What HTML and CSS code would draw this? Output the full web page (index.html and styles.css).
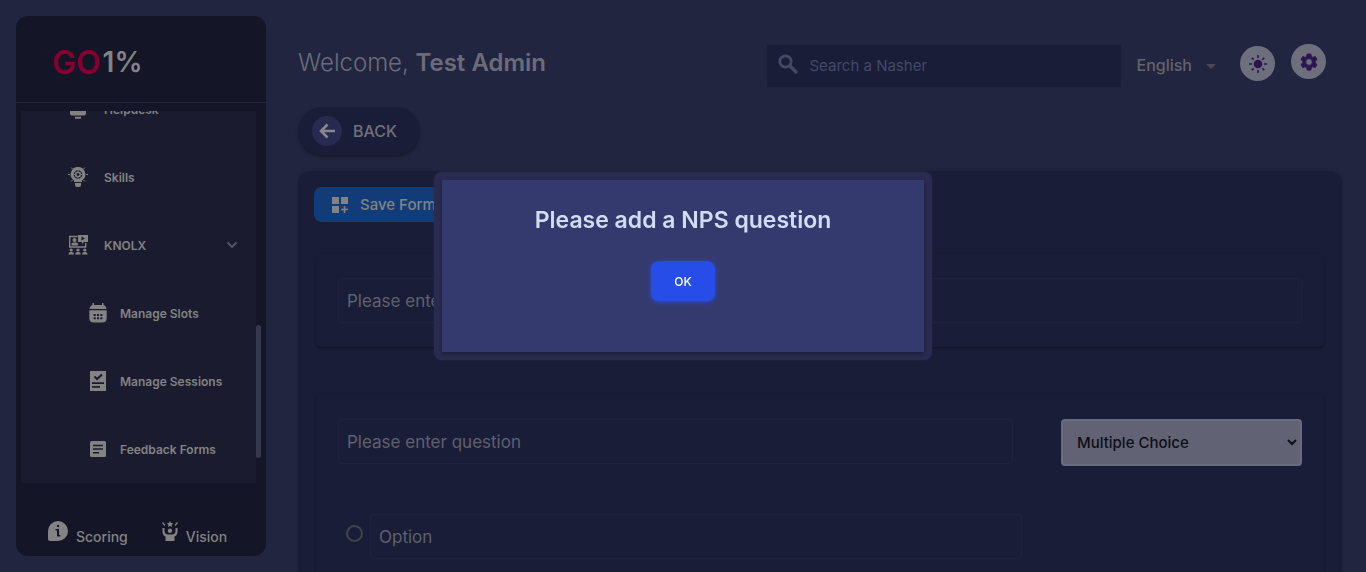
FILE: index.html
```html
<!DOCTYPE html>
<html lang="en">
<head>
<meta charset="utf-8">
<meta name="viewport" content="width=device-width, initial-scale=1">
<title>GO1% – Feedback Forms</title>
<link rel="stylesheet" href="styles.css">
</head>
<body>
<div class="app">
  <aside class="sidebar">
    <div class="brand"><span class="brand-go">GO</span><span class="brand-pct">1%</span></div>
    <div class="menu-wrap">
      <nav class="menu">
        <a class="item" href="#">
          <svg class="icon" viewBox="0 0 20 20"><path d="M4 1h12q2 0 2 2v11.500q0 2-2 2H4q-2 0-2-2V3q0-2 2-2zM7 17.800h6v2H7z"/></svg>
          <span>Helpdesk</span>
        </a>
        <a class="item" href="#">
          <svg class="icon" viewBox="0 0 20 20"><path fill-rule="evenodd" d="M10 0a7.300 7.300 0 0 1 4 13.400V15H6v-1.600A7.300 7.300 0 0 1 10 0zm0 3.200a4.300 4.300 0 1 0 0 8.600 4.300 4.300 0 0 0 0-8.600z"/><circle cx="10" cy="7.500" r="2.200" fill="none" stroke="currentColor" stroke-width="1.500"/><path d="M10 3.500v8M6 7.500h2M12 7.500h2M7.200 4.700l1.200 1.200M12.800 4.700l-1.200 1.200M7.200 10.300l1.200-1.200M12.800 10.300l-1.200-1.200" stroke="currentColor" stroke-width="1" stroke-dasharray="2 4"/><path d="M7 16h6v2q0 2-2 2H9q-2 0-2-2zM0 7h2v1H0zM18 7h2v1h-2z"/><path d="M3 .5l1.500 1.500M17 .5l-1.500 1.500M3 14.500l1.500-1.500M17 14.500l-1.500-1.500" stroke="currentColor"/></svg>
          <span>Skills</span>
        </a>
        <a class="item" href="#">
          <svg class="icon" viewBox="0 0 20 20"><path d="M9.500 1.500H1.700v10.500h16V8" fill="none" stroke="currentColor" stroke-width="1.400"/><path d="M10 0h10v7h-4l-2 2V7h-4z"/><path class="cut" d="M13.500 1.500l3.500 2-3.500 2z"/><circle cx="6.500" cy="5" r="2"/><path d="M3.500 10.500V9q0-1.500 2-1.500h2.500q2 0 2 1.500v1.500z"/><circle cx="3.200" cy="15" r="1.600"/><circle cx="10" cy="15" r="1.600"/><circle cx="16.800" cy="15" r="1.600"/><path d="M.4 19.500q0-2.500 2-2.500H4q2 0 2 2.500zM7.200 19.500q0-2.500 2-2.500h1.600q2 0 2 2.500zM14 19.500q0-2.500 2-2.500h1.600q2 0 2 2.500z"/></svg>
          <span>KNOLX</span>
          <svg class="chevron" viewBox="0 0 12 8"><path d="M1.500 1.500L6 6l4.500-4.500" fill="none" stroke="currentColor" stroke-width="1.800"/></svg>
        </a>
        <a class="item sub" href="#">
          <svg class="icon" viewBox="0 0 20 20"><path d="M4.500 0H6v2h8V0h1.500v2Q18 2.500 18.500 6h-17Q2 2.500 4.500 2z"/><path d="M1.300 7.300h17.400V15q0 4.500-4.500 4.500H5.800Q1.300 19.500 1.300 15z"/><path class="cut" d="M5.700 11h2v2h-2zM9 11h2v2H9zM12.300 11h2v2h-2zM5.700 14.300h2v2h-2zM9 14.300h2v2H9zM12.300 14.300h2v2h-2z"/></svg>
          <span>Manage Slots</span>
        </a>
        <a class="item sub" href="#">
          <svg class="icon" viewBox="0 0 20 20"><path d="M2 0h16v20H2z"/><path class="cut" d="M4 11.200h12V13H4zM4 15h8v1.800H4z"/><path class="cut-line" d="M6.500 5.500l2.500 2.500L14 3.500"/></svg>
          <span>Manage Sessions</span>
        </a>
        <a class="item sub" href="#">
          <svg class="icon" viewBox="0 0 20 20"><rect x="2" y="2" width="16" height="16" rx="1.500"/><path class="cut" d="M5 5.700h10v1.500H5zM5 9.300h10v1.500H5zM5 13h6v1.500H5z"/></svg>
          <span>Feedback Forms</span>
        </a>
      </nav>
      <span class="thumb"></span>
    </div>
    <div class="side-foot">
      <a href="#"><svg class="foot-icon" viewBox="0 0 20 20"><path d="M10 0a10 10 0 0 1 0 20H2q-2 0-2-2v-8A10 10 0 0 1 10 0z"/><path class="cut-dark" d="M9 4h2v2H9zM7.500 8H11v6h1.300v1.500H9V9.500H7.500z"/></svg><span>Scoring</span></a>
      <a href="#"><svg class="foot-icon narrow" viewBox="2 0 16 20"><path d="M10 0l1 2 2.200.3-1.600 1.600.4 2.200-2-1-2 1 .4-2.200L6.800 2.300 9 2z"/><circle cx="10" cy="9.800" r="2.200"/><path d="M2.500 7h2v3q0 3 3 3.500h5q3-.5 3-3.500V7h2v3.500q0 3.500-3 5V20h-9v-4.500q-3-1.500-3-5z"/><path d="M2.500 1.500L5 4.500M17.500 1.500L15 4.500" stroke="currentColor" stroke-width="1.200"/></svg><span>Vision</span></a>
    </div>
  </aside>

  <main class="main">
    <header class="top">
      <h1 class="welcome">Welcome, <strong>Test Admin</strong></h1>
      <label class="search">
        <svg class="search-icon" viewBox="0 0 20 20"><circle cx="7.500" cy="7.500" r="5.700" fill="none" stroke="currentColor" stroke-width="2.800"/><path d="M12 12l6 6" stroke="currentColor" stroke-width="3.200" stroke-linecap="round"/></svg>
        <input type="search" placeholder="Search a Nasher" aria-label="Search a Nasher">
      </label>
      <button class="lang" type="button">English <svg class="caret" viewBox="0 0 10 5"><path d="M0 0h10L5 5z"/></svg></button>
      <button class="round theme" type="button" aria-label="Toggle theme"><svg viewBox="0 0 20 20"><circle cx="10" cy="10" r="4.300"/><path d="M10 1v3M10 16v3M1 10h3M16 10h3M3.800 3.800l1.800 1.800M14.400 14.400l1.800 1.800M3.800 16.200l1.800-1.800M14.400 5.600l1.800-1.800" stroke="currentColor" stroke-width="1.600"/></svg></button>
      <button class="round" type="button" aria-label="Settings"><svg viewBox="0 0 20 20"><path fill-rule="evenodd" stroke="currentColor" stroke-linejoin="round" d="M8.200 2h3.600l.5 2.500 1.500.9 2.400-.9 1.800 3.100-1.900 1.600v1.700l1.900 1.600-1.800 3.100-2.400-.9-1.500.9-.5 2.500H8.200l-.5-2.500-1.500-.9-2.400.9L2 12.500l1.900-1.600V9.200L2 7.600l1.800-3.100 2.400.9 1.500-.9zM10 6.600a3.400 3.400 0 1 0 0 6.800 3.400 3.400 0 0 0 0-6.800z"/></svg></button>
    </header>

    <button class="back" type="button">
      <span class="back-dot"><svg viewBox="0 0 16 16"><path d="M8.500 1.500L2 8l6.500 6.500M2.500 8H16" fill="none" stroke="currentColor" stroke-width="2.600"/></svg></span>
      BACK
    </button>

    <form class="card">
      <button class="save" type="button">
        <svg viewBox="0 0 16 16"><path d="M0 0h7v7H0zM9 0h7v7H9zM0 9h7v7H0zM11.700 9h1.600v2.700H16v1.600h-2.700V16h-1.600v-2.700H9v-1.600h2.700z"/></svg>
        Save Form
      </button>
      <section class="panel">
        <input class="field" type="text" placeholder="Please enter form name" aria-label="Form name">
      </section>
      <section class="panel question">
        <div class="q-row">
          <input class="field" type="text" placeholder="Please enter question" aria-label="Question">
          <select class="kind" aria-label="Question type"><option>Multiple Choice</option></select>
        </div>
        <div class="opt-row">
          <input class="radio" type="radio" aria-label="Option choice">
          <input class="field" type="text" placeholder="Option" aria-label="Option text">
        </div>
      </section>
    </form>
  </main>
</div>

<div class="overlay">
  <div class="modal" role="dialog" aria-modal="true" aria-labelledby="modal-title">
    <div class="modal-body">
      <h2 class="modal-title" id="modal-title">Please add a NPS question</h2>
      <button class="ok" type="button">OK</button>
    </div>
  </div>
</div>
</body>
</html>
```

FILE: styles.css
```css
* { box-sizing: border-box; }

body {
  margin: 0;
  background: #222540;
  color: #80818a;
  font-family: Inter, "Open Sans", sans-serif;
}

button, input, select { font: inherit; color: inherit; margin: 0; }
button { border: 0; cursor: pointer; }
a { color: inherit; text-decoration: none; }
svg { display: block; flex: none; fill: currentColor; }

.app {
  display: flex;
  height: 100vh;
  overflow: hidden;
  padding: 16px 24px 0 16px;
  gap: 32px;
}

/* Sidebar */
.sidebar {
  flex: none;
  width: 250px;
  height: calc(100vh - 32px);
  display: flex;
  flex-direction: column;
  background: #141526;
  border-radius: 12px;
  color: #838383;
}

.brand {
  display: flex;
  align-items: center;
  gap: 2px;
  height: 87px;
  padding: 6px 36px 0;
  border-bottom: 1px solid #25263a;
  font-size: 32px;
  font-weight: 600;
}
.brand-go { color: #86002f; }
.brand-pct { font-size: 28px; }

.menu-wrap {
  position: relative;
  flex: 1;
  min-height: 0;
  margin: 8px 5px 0;
  padding-right: 5px;
}
.menu {
  display: flex;
  flex-direction: column;
  justify-content: flex-end;
  height: 100%;
  overflow: hidden;
  background: #1a1b2f;
}
.item {
  flex: none;
  display: flex;
  align-items: center;
  gap: 16px;
  height: 68px;
  padding: 0 18px 0 47px;
  font-size: 12px;
  font-weight: 600;
}
.item.sub { padding-left: 67px; gap: 12px; }
.icon { width: 20px; height: 20px; }
.cut { fill: #1a1b2f; }
.cut-line { fill: none; stroke: #1a1b2f; stroke-width: 2; }
.cut-dark { fill: #141526; }
.chevron { width: 12px; height: 8px; margin-left: auto; color: #555865; }
.thumb {
  position: absolute;
  right: 0;
  bottom: 25px;
  width: 5px;
  height: 133px;
  border-radius: 3px;
  background: #35394f;
}

.side-foot {
  display: flex;
  gap: 34px;
  height: 73px;
  padding: 38px 32px 0;
  font-size: 14px;
  font-weight: 500;
}
.side-foot a { display: flex; gap: 8px; height: 24px; }
.side-foot span { line-height: 32px; }
.foot-icon { width: 20px; height: 20px; }
.foot-icon.narrow { width: 16px; }

/* Header */
.main {
  flex: 1;
  min-width: 0;
  display: flex;
  flex-direction: column;
  align-items: flex-start;
}
.top {
  flex: none;
  align-self: stretch;
  display: flex;
  align-items: center;
  margin-top: 28px;
  padding-right: 16px;
}
.welcome {
  flex: 1;
  margin: 0 0 6px;
  color: #6a6d79;
  font-size: 24px;
  line-height: 32px;
  font-weight: 300;
}
.welcome strong { font-weight: 600; }
.search {
  display: flex;
  align-items: center;
  gap: 12px;
  width: 354px;
  height: 42px;
  padding: 0 11px;
  background: #1a1d37;
  color: #454967;
}
.search-icon { width: 20px; height: 20px; margin-bottom: 4px; }
.search input {
  flex: 1;
  min-width: 0;
  padding: 0;
  border: 0;
  outline: 0;
  background: none;
  font-size: 15px;
}
.search input::placeholder { color: #444869; }
.lang {
  display: flex;
  align-items: center;
  gap: 14px;
  margin: 0 24px 2px 16px;
  padding: 0;
  background: none;
  color: #63646c;
  font-size: 16px;
  font-weight: 500;
}
.caret { width: 10px; height: 5px; margin-top: 4px; color: #4b4a59; }
.round {
  display: grid;
  place-items: center;
  width: 35px;
  height: 35px;
  margin-bottom: 8px;
  padding: 0;
  border-radius: 50%;
  background: #6d6f7d;
  color: #2b1450;
}
.round svg { width: 20px; height: 20px; }
.theme { margin: 0 16px 4px 0; }

.back {
  flex: none;
  display: flex;
  align-items: center;
  gap: 11px;
  height: 48px;
  margin-top: 20px;
  padding: 0 23px 0 14px;
  border-radius: 24px;
  background: #1a1d37;
  box-shadow: 0 2px 3px #191a2c;
  color: #6f717c;
  font-size: 16px;
  font-weight: 500;
}
.back-dot {
  display: grid;
  place-items: center;
  width: 30px;
  height: 30px;
  border-radius: 50%;
  background: #292a51;
  color: #87888c;
}
.back-dot svg { width: 16px; height: 16px; }

/* Form */
.card {
  align-self: stretch;
  flex: 1 0 auto;
  margin-top: 16px;
  padding: 16px;
  border-radius: 12px 12px 0 0;
  background: #1a1d37;
  box-shadow: 0 0 3px #1e1f36;
}
.save {
  display: flex;
  align-items: center;
  gap: 12px;
  height: 35px;
  padding: 0 18px;
  border-radius: 8px;
  background: #123c78;
  color: #808488;
  font-size: 15px;
  font-weight: 500;
}
.save svg { width: 16px; height: 16px; }
.panel {
  margin: 32px 2px 0;
  padding: 24px 22px;
  border-radius: 6px;
  box-shadow: 0 2px 2px -1px #11121f, 0 0 2px #1c1b32;
}
.question { margin-top: 48px; padding-bottom: 64px; }
.field {
  display: block;
  width: 100%;
  height: 45px;
  padding: 0 8px;
  border: 1px solid #20233f;
  border-radius: 4px;
  outline: 0;
  background: #1a1d37;
  font-size: 17px;
}
.field::placeholder { color: #5e616e; opacity: 1; }
.q-row { display: flex; gap: 48px; }
.q-row .field { flex: 1; min-width: 0; }
.kind {
  flex: none;
  width: 25%;
  height: 47px;
  padding: 0 10px;
  border: 2px solid #696c80;
  border-radius: 4px;
  background: #616374;
  color: #0e0e16;
  font-size: 15px;
  font-weight: 500;
}
.opt-row {
  display: flex;
  align-items: center;
  gap: 7px;
  width: 71%;
  margin-top: 48px;
  padding-left: 8px;
}
.radio {
  appearance: none;
  flex: none;
  width: 17px;
  height: 17px;
  margin-bottom: 6px;
  border: 2px solid #42424f;
  border-radius: 50%;
}

/* Dialog */
.overlay {
  position: fixed;
  inset: 0;
  display: flex;
  align-items: center;
  justify-content: center;
  padding-bottom: 40px;
}
.modal {
  width: 498px;
  max-width: 90%;
  padding: 8px;
  border-radius: 8px;
  background: #292c50;
  box-shadow: 0 0 2px #292c50;
}
.modal-body {
  display: flex;
  flex-direction: column;
  align-items: center;
  gap: 25px;
  padding: 24px 16px 51px;
  background: #353a6e;
  box-shadow: 0 2px 4px #1b1d36;
}
.modal-title {
  margin: 0;
  color: #d2dcf3;
  font-size: 23px;
  line-height: 32px;
  font-weight: 600;
}
.ok {
  height: 40px;
  padding: 0 23px;
  border-radius: 8px;
  background: #274de8;
  box-shadow: 0 1px 4px #274de8;
  color: #fff;
  font-size: 12px;
  font-weight: 500;
}
```
